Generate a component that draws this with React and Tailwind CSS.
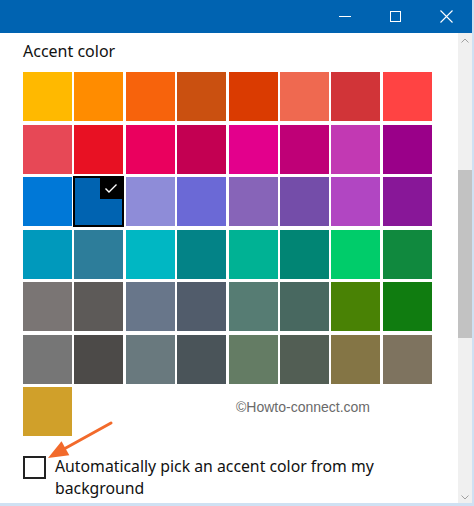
import React from "react";

const rows = [
  ["#FFB900", "#FF8C00", "#F7630C", "#CA5010", "#DA3B01", "#EF6950", "#D13438", "#FF4343"],
  ["#E74856", "#E81123", "#EA005E", "#C30052", "#E3008C", "#BF0077", "#C239B3", "#9A0089"],
  ["#0078D7", "#0063B1", "#8E8CD8", "#6B69D6", "#8764B8", "#744DA9", "#B146C2", "#881798"],
  ["#0099BC", "#2D7D9A", "#00B7C3", "#038387", "#00B294", "#018574", "#00CC6A", "#10893E"],
  ["#7A7574", "#5D5A58", "#68768A", "#515C6B", "#567C73", "#486860", "#498205", "#107C10"],
  ["#767676", "#4C4A48", "#69797E", "#4A5459", "#647C64", "#525E54", "#847545", "#7E735F"],
  ["#D0A02A"],
];

function Swatch({ color, selected }) {
  if (selected) {
    return (
      <div className="relative w-[49px] h-[49px]">
        <div
          className="absolute -inset-[1px] border-[2px] border-black"
          style={{ backgroundColor: color }}
        >
          <div className="absolute right-0 top-0 w-[22px] h-[21px] bg-black flex items-center justify-center">
            <svg width="14" height="11" viewBox="0 0 14 11" fill="none">
              <path d="M1.5 5.5 L5 9 L12.5 1.5" stroke="#fff" strokeWidth="1.4" />
            </svg>
          </div>
        </div>
      </div>
    );
  }
  return <div className="w-[49px] h-[49px]" style={{ backgroundColor: color }} />;
}

export default function App() {
  return (
    <div className="relative w-[474px] h-[506px] overflow-hidden bg-white flex flex-col border-b-[3px] border-r-[2px] border-[#cfe1f3]" style={{ fontFamily: '"Noto Sans", "Open Sans", sans-serif' }}>
      {/* Title bar */}
      <div className="h-[33px] bg-[#0063B1] flex justify-end shrink-0">
        <div className="w-[51px] h-full flex items-center justify-center">
          <div className="w-[12px] h-[1px] bg-white" />
        </div>
        <div className="w-[51px] h-full flex items-center justify-center">
          <div className="w-[11px] h-[11px] border border-white" />
        </div>
        <div className="w-[51px] h-full flex items-center justify-center">
          <svg width="13" height="13" viewBox="0 0 13 13">
            <path d="M0.5 0.5 L12.5 12.5 M12.5 0.5 L0.5 12.5" stroke="#fff" strokeWidth="1.1" />
          </svg>
        </div>
      </div>

      <div className="flex flex-1 min-h-0">
        {/* Content */}
        <div className="flex-1 pl-[23px] pt-[6px]">
          <div className="text-[16px] leading-[24px] text-[#111] h-[33px]">Accent color</div>
          <div className="grid grid-cols-[repeat(8,49px)] gap-x-[2.4px] gap-y-[3.5px]">
            {rows.map((r, ri) =>
              r.map((c, ci) => (
                <Swatch key={`${ri}-${ci}`} color={c} selected={ri === 2 && ci === 1} />
              ))
            )}
          </div>
          <div className="flex items-start gap-[9px] mt-[20px]">
            <div className="w-[23px] h-[23px] border-[2px] border-[#222] shrink-0" />
            <div className="text-[15.8px] leading-[22px] text-[#111] w-[340px] -mt-[1px]">
              Automatically pick an accent color from my background
            </div>
          </div>
        </div>

        {/* Scrollbar */}
        <div className="w-[14px] bg-[#f0f0f0] flex flex-col items-center relative shrink-0">
          <svg className="mt-[5px]" width="8" height="5" viewBox="0 0 8 5">
            <path d="M0.5 4.5 L4 1 L7.5 4.5" stroke="#a0a0a0" fill="none" strokeWidth="1" />
          </svg>
          <div className="absolute left-0 right-0 top-[137px] h-[168px] bg-[#c2c2c2]" />
          <div className="flex-1" />
          <svg className="mb-[3px]" width="8" height="5" viewBox="0 0 8 5">
            <path d="M0.5 0.5 L4 4 L7.5 0.5" stroke="#a0a0a0" fill="none" strokeWidth="1" />
          </svg>
        </div>
      </div>

      {/* Watermark */}
      <div
        className="absolute left-[236px] top-[397px] text-[14px] text-[#6a6a6a]"
        style={{ fontFamily: '"Liberation Sans", Arial, sans-serif' }}
      >
        ©Howto-connect.com
      </div>

      {/* Arrow annotation */}
      <svg className="absolute left-0 top-0 pointer-events-none" width="474" height="506">
        <line x1="111" y1="423" x2="64" y2="449" stroke="#F26A2B" strokeWidth="3" strokeLinecap="round" />
        <polygon points="48,458 69.3,455.2 61.5,441.2" fill="#F26A2B" />
      </svg>
    </div>
  );
}
